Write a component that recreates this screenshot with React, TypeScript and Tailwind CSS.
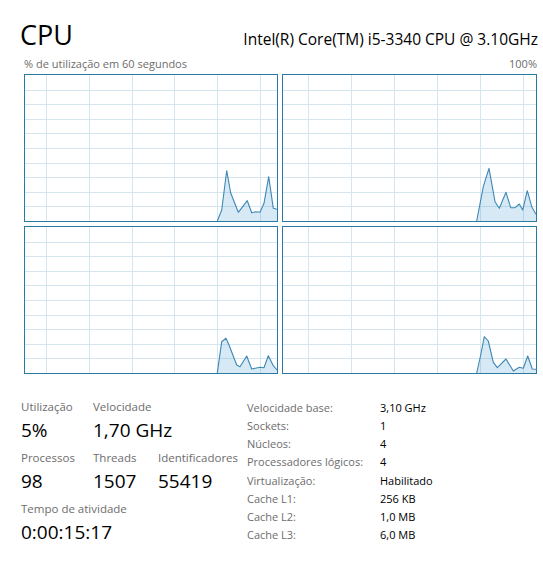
import React from "react";

type Pt = [number, number];

interface ChartProps {
  w: number;
  offset: number;
  points: Pt[];
}

const H = 146;

function CoreChart({ w, offset, points }: ChartProps) {
  const vlines: number[] = [];
  for (let x = offset; x < w; x += 42.9) vlines.push(Math.round(x) + 0.5);
  const hlines: number[] = [];
  for (let i = 1; i < 10; i++) hlines.push(Math.round(i * 14.6) + 0.5);

  const line = points.map(([x, y], i) => `${i ? "L" : "M"}${x},${y}`).join(" ");
  const last = points[points.length - 1];
  const area = `${line} L${last[0]},${H} Z`;

  return (
    <div className="border border-[#2b7aa4] bg-white">
      <svg width={w} height={H} className="block">
        {vlines.map((x) => (
          <line key={"v" + x} x1={x} y1={0} x2={x} y2={H} stroke="#d6e6f0" strokeWidth={1} />
        ))}
        {hlines.map((y) => (
          <line key={"h" + y} x1={0} y1={y} x2={w} y2={y} stroke="#d6e6f0" strokeWidth={1} />
        ))}
        <path d={area} fill="#117dbb" fillOpacity={0.17} />
        <path d={line} fill="none" stroke="#3e88b4" strokeWidth={1.1} strokeLinejoin="round" />
      </svg>
    </div>
  );
}

const cores: { w: number; offset: number; points: Pt[] }[] = [
  {
    w: 252,
    offset: 20.7,
    points: [
      [192.3, 146], [196.7, 135], [201.7, 95.7], [205.7, 118], [213.3, 137.3], [222.3, 125.7],
      [226.7, 137.7], [231, 136.7], [235, 137.3], [239, 128.3], [243.7, 101.7], [248.3, 133.3], [252, 134.3],
    ],
  },
  {
    w: 253,
    offset: 25.3,
    points: [
      [193.7, 146], [200.3, 111.7], [206, 93.3], [212, 126.7], [216.3, 133.3], [223, 117.3],
      [227.7, 132.7], [232, 132.7], [236.3, 129], [239.7, 135], [244.3, 115.7], [248.7, 131.7], [253, 139.3],
    ],
  },
  {
    w: 252,
    offset: 20.7,
    points: [
      [192.3, 146], [196.7, 114.7], [201, 111.3], [204.3, 118.7], [211.7, 138], [215, 139.7],
      [221.7, 129], [226.7, 142], [235, 140.3], [239, 140.7], [243.3, 128.7], [248.3, 138.7], [252, 143],
    ],
  },
  {
    w: 253,
    offset: 25.3,
    points: [
      [193.7, 146], [197.7, 128], [201.3, 109.7], [205.3, 114], [210.3, 135.3], [214.3, 140.7],
      [223, 132], [230.3, 144], [236.3, 140.3], [240.3, 141.3], [244.7, 129], [249.3, 142], [253, 142.3],
    ],
  },
];

const details: [string, string][] = [
  ["Velocidade base:", "3,10 GHz"],
  ["Sockets:", "1"],
  ["Núcleos:", "4"],
  ["Processadores lógicos:", "4"],
  ["Virtualização:", "Habilitado"],
  ["Cache L1:", "256 KB"],
  ["Cache L2:", "1,0 MB"],
  ["Cache L3:", "6,0 MB"],
];

function Stat({ label, value }: { label: string; value: string }) {
  return (
    <div className="flex flex-col gap-[3px]">
      <span className="text-[11.5px] leading-[16px] text-[#6d6d6d] whitespace-nowrap">{label}</span>
      <span className="text-[19px] leading-[24px] text-black whitespace-nowrap">{value}</span>
    </div>
  );
}

export default function App() {
  return (
    <div
      className="w-[543px] h-[564px] bg-white overflow-hidden text-black"
      style={{ fontFamily: '"Open Sans", "Noto Sans", sans-serif' }}
    >
      {/* cabeçalho */}
      <div className="flex items-baseline justify-between pt-[21px] pl-[20px] pr-[5px]">
        <span className="text-[27px] leading-[28px]">CPU</span>
        <span className="text-[15.5px] leading-none">Intel(R) Core(TM) i5-3340 CPU @ 3.10GHz</span>
      </div>

      <div className="flex justify-between mt-[8px] pl-[24px] pr-[6px] text-[11px] leading-[14px] text-[#6d6d6d]">
        <span>% de utilização em 60 segundos</span>
        <span>100%</span>
      </div>

      {/* gráficos */}
      <div className="grid grid-cols-[254px_255px] gap-[4px] mt-[3px] ml-[24px]">
        {cores.map((c, i) => (
          <CoreChart key={i} {...c} />
        ))}
      </div>

      {/* estatísticas */}
      <div className="flex mt-[25px]">
        <div className="flex flex-col gap-[8px] pl-[21px] w-[247px]">
          <div className="grid grid-cols-[72px_65px_auto]">
            <Stat label="Utilização" value="5%" />
            <Stat label="Velocidade" value="1,70 GHz" />
          </div>
          <div className="grid grid-cols-[72px_65px_auto]">
            <Stat label="Processos" value="98" />
            <Stat label="Threads" value="1507" />
            <Stat label="Identificadores" value="55419" />
          </div>
          <Stat label="Tempo de atividade" value="0:00:15:17" />
        </div>

        <div className="grid grid-cols-[133px_auto] text-[11px] leading-[18px]">
          {details.map(([k, v]) => (
            <React.Fragment key={k}>
              <span className="text-[#6d6d6d] whitespace-nowrap">{k}</span>
              <span className="text-black whitespace-nowrap">{v}</span>
            </React.Fragment>
          ))}
        </div>
      </div>
    </div>
  );
}
